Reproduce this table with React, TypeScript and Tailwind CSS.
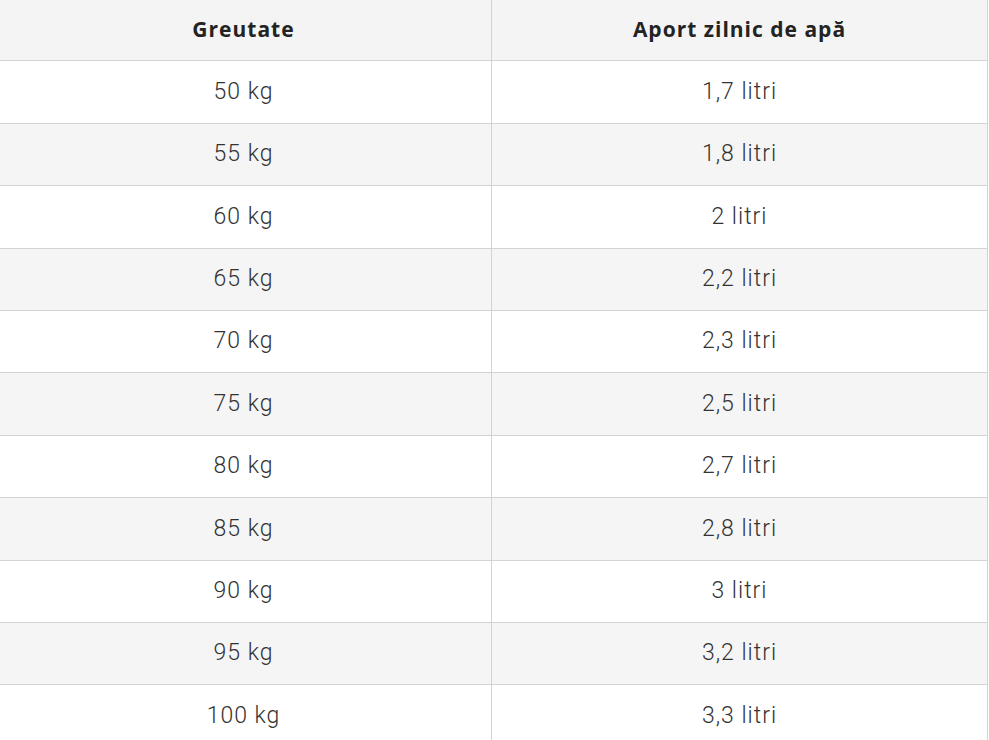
const rows = [
  ['50 kg', '1,7 litri'],
  ['55 kg', '1,8 litri'],
  ['60 kg', '2 litri'],
  ['65 kg', '2,2 litri'],
  ['70 kg', '2,3 litri'],
  ['75 kg', '2,5 litri'],
  ['80 kg', '2,7 litri'],
  ['85 kg', '2,8 litri'],
  ['90 kg', '3 litri'],
  ['95 kg', '3,2 litri'],
  ['100 kg', '3,3 litri'],
];

export default function App() {
  return (
    <div className="w-[989px] h-[740px] overflow-hidden bg-white font-['Roboto',sans-serif]">
      <div className="-ml-[4px] -mt-[2px] w-[992px] border-t border-[#d3d3d3]">
        {/* header */}
        <div className="flex h-[62.4px] bg-[#f4f4f4] border-b border-[#d3d3d3] font-['Open_Sans',sans-serif] text-[21px] font-bold tracking-[1px] text-[#232323]">
          <div className="w-[496px] flex items-center justify-center border-r border-[#d3d3d3]">Greutate</div>
          <div className="w-[496px] flex items-center justify-center border-r border-[#d3d3d3]">Aport zilnic de apă</div>
        </div>

        {rows.map(([kg, water], i) => (
          <div
            key={kg}
            className={
              'flex h-[62.4px] border-b border-[#d3d3d3] text-[23px] font-light tracking-[1px] text-[#333] ' +
              (i % 2 === 0 ? 'bg-white' : 'bg-[#f5f5f5]')
            }
          >
            <div className="w-[496px] flex items-center justify-center border-r border-[#d3d3d3]">{kg}</div>
            <div className="w-[496px] flex items-center justify-center border-r border-[#d3d3d3]">{water}</div>
          </div>
        ))}
      </div>
    </div>
  );
}
